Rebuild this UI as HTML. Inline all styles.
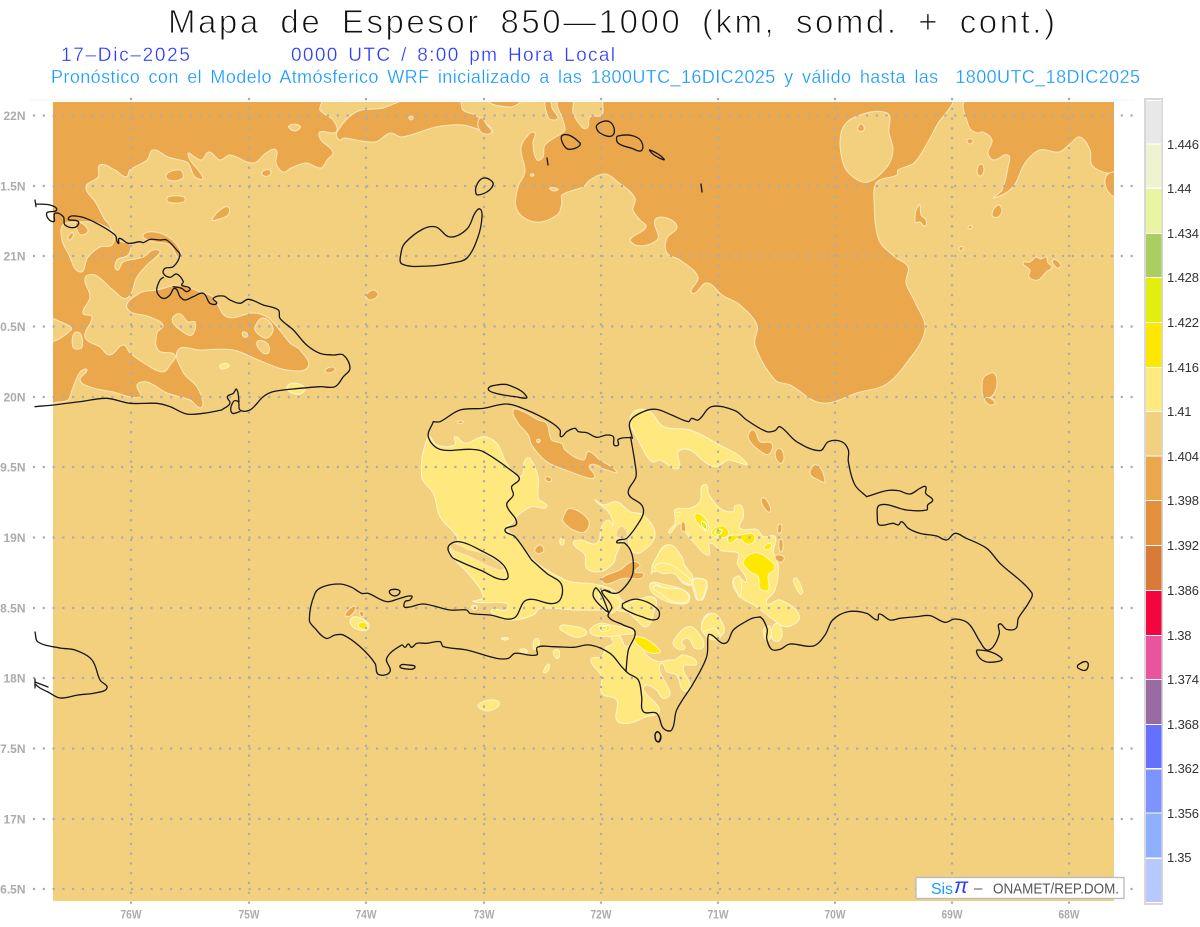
<!DOCTYPE html>
<html lang="es"><head><meta charset="utf-8"><title>Mapa de Espesor 850-1000</title>
<style>html,body{margin:0;padding:0;background:#fff;width:1200px;height:927px;overflow:hidden}svg{display:block}
text{font-family:"Liberation Sans",sans-serif;white-space:pre}
.d{fill:#eba74b;stroke:#fbe8bd;stroke-width:1;stroke-linejoin:round}
.l{fill:#f3d07e;stroke:#fbe8bd;stroke-width:1;stroke-linejoin:round}
.p{fill:#ffe97f;stroke:#fff6cf;stroke-width:1;stroke-linejoin:round}
.y{fill:#ffe800;stroke:#fff6cf;stroke-width:.8;stroke-linejoin:round}
.g{fill:#dde622;stroke:#fff;stroke-width:.6}
.c{fill:none;stroke:#161616;stroke-width:1.3;stroke-linejoin:round;stroke-linecap:round}
.lb{font-size:12px;font-weight:700;fill:#ababab}
.cl{font-size:13px;fill:#333}
.z .d,.z .l,.z .p,.z .y,.z .g{stroke-width:3}
.z .c{stroke-width:3.9}
</style></head><body>
<svg width="1200" height="927" viewBox="0 0 1200 927" xmlns="http://www.w3.org/2000/svg">
<defs><clipPath id="m"><rect x="53" y="102" width="1061" height="799"/></clipPath></defs>
<text x="168" y="33" font-size="33" word-spacing="8" textLength="887" lengthAdjust="spacing" fill="#111" stroke="#fff" stroke-width=".95">Mapa de Espesor 850—1000 (km, somd. + cont.)</text>
<text x="61" y="61" font-size="19" textLength="129" lengthAdjust="spacing" fill="#2b3dff" stroke="#fff" stroke-width=".3">17–Dic–2025</text>
<text x="291" y="61" font-size="19" word-spacing="3" textLength="324" lengthAdjust="spacing" fill="#2b3dff" stroke="#fff" stroke-width=".3">0000 UTC / 8:00 pm Hora Local</text>
<text x="51" y="83" font-size="18" word-spacing="3" textLength="1089" lengthAdjust="spacing" fill="#1a9bff" stroke="#fff" stroke-width=".25">Pronóstico con el Modelo Atmósferico WRF inicializado a las 1800UTC_16DIC2025 y válido hasta las  1800UTC_18DIC2025</text>

<path d="M30 100H1135" stroke="#f3f3f3" stroke-width="1"/>
<rect x="53" y="102" width="1061" height="799" fill="#f3d07e"/>
<g clip-path="url(#m)">
<!-- dark orange areas, real coords -->
<path class="d" d="M40,100 321,100 320,110 333,120 336,132 320,132 321,140 333,152 327,160 321,168 306,163 291,168 283,172 276,163 276,150 266,153 253,163 230,155 220,160 209,152 201,160 188,154 203,178 195,177 188,163 180,160 168,157 153,150 147,160 130,170 126,177 115,170 100,165 98,177 86,187 96,203 105,220 108,223 118,240 130,245 128,255 117,260 117,270 123,262 143,257 153,250 160,252 147,265 137,277 127,298 113,290 95,275 85,278 90,297 83,313 92,317 85,337 100,347 110,355 123,345 130,353 147,365 163,372 170,365 175,355 158,350 157,333 163,325 150,317 127,308 140,293 157,290 180,285 200,292 213,297 227,317 253,313 267,317 278,328 290,343 300,350 308,367 287,370 263,362 233,350 200,350 178,350 183,372 197,387 203,403 200,408 190,400 167,393 147,382 137,385 140,397 113,392 90,387 80,380 87,370 80,372 72,390 68,400 58,402 40,403Z"/>
<path class="l" d="M63,225 80,222 97,223 113,233 112,245 100,247 88,257 80,272 68,253 62,240Z"/>
<path class="d" d="M77,222 88,230 82,235 77,230Z"/>
<path class="d" d="M68,237 73,233 70,240Z"/>
<path class="l" d="M40,318 61,322 71,330 40,342Z"/>
<path class="l" d="M73,347 82,347 77,332Z"/>
<path class="l" d="M173,317 180,314 188,322 195,322 192,335 183,332 173,323Z"/>
<path class="l" d="M255,327 263,318 273,328 267,338 257,333Z"/>
<path class="l" d="M257,342 267,343 269,352 263,353Z"/>
<path class="l" d="M243,332 248,335 244,337Z"/>
<path class="l" d="M289,126 300,126 295,131Z"/>
<path class="d" d="M143,235 155,232 170,238 180,250 179,258 170,245 150,241Z"/>
<path class="d" d="M262,172 270,170 270,175 264,176Z"/>
<path class="d" d="M166,177 180,170 182,179Z"/>
<path class="d" d="M168,197 184,197 184,202 168,202Z"/>
<path class="d" d="M212,220 220,210 228,207 228,215 216,220Z"/>
<path class="d" d="M325,370 333,367 335,370 328,373Z"/>
<path class="d" d="M366,296 373,290 378,295 370,300Z"/>
<path class="p" d="M287,387 293,383 305,388 300,394 290,392Z"/>
<path class="p" d="M220,365 229,365 222,369Z"/>
<!-- strip 2 -->
<path class="d" d="M339,140 337,132 356,112 383,108 406,100 459,100 463,110 475,115 486,123 492,132 463,125 436,127 402,137 390,133 375,142 344,138Z"/>
<path class="l" d="M409,117 413,117 411,120Z"/>
<path class="d" d="M490,100 510,107 520,100Z"/>
<path class="d" d="M480,118 487,125 491,133 480,131Z"/>
<path class="d" d="M545,100 548,117 553,120 558,118 552,108 550,100Z"/>
<!-- central big dark -->
<path class="d" d="M558,100 572,100 573,113 583,128 588,127 590,117 602,115 605,100 950,100 937,125 925,147 914,163 898,170 897,175 877,182 874,200 879,240 895,257 908,267 906,283 914,300 925,330 905,365 885,385 860,392 822,403 790,385 775,380 755,345 757,325 740,305 722,295 707,283 692,293 698,277 680,260 667,253 667,238 677,227 667,218 655,220 657,240 631,242 646,227 640,220 633,210 635,198 618,182 605,174 590,180 583,187 562,195 562,203 557,215 535,222 517,210 518,187 525,172 521,148 530,133 535,133 533,143 537,160 543,157 545,145 562,133 565,130 562,117 558,108Z"/>
<path class="l" d="M550,188 558,189 554,191Z"/>
<path class="l" d="M531,174 534,175 531,176Z"/>
<!-- island of light in dark -->
<path class="l" d="M841,133 853,118 887,113 889,133 893,150 887,167 868,182 853,177 843,163Z"/>
<path class="d" d="M858,130 861,124 864,130Z"/>
<!-- east dark -->
<path class="d" d="M967,100 969,127 977,133 983,132 992,140 988,153 994,160 1008,155 1008,167 1002,190 994,198 1013,187 1025,163 1040,150 1059,152 1071,143 1080,137 1090,150 1092,165 1107,173 1125,172 1125,100Z"/>
<path class="d" d="M1107,175 1125,175 1125,197 1109,193Z"/>
<path class="d" d="M967,140 973,140 970,144Z"/>
<path class="d" d="M977,170 981,164 984,170 980,176Z"/>
<path class="d" d="M992,215 998,205 1002,210 998,217Z"/>
<path class="d" d="M915,222 919,205 921,215 926,220 925,226 920,222Z"/>
<path class="d" d="M1023,263 1030,262 1036,257 1041,259 1046,257 1048,263 1052,267 1046,272 1038,280 1029,277 1030,270Z"/>
<path class="d" d="M1053,260 1061,265 1057,268Z"/>
<path class="d" d="M982,385 985,376 995,374 995,392 985,398Z"/>
<path class="d" d="M985,398 995,402 990,405Z"/>
<path class="d" d="M968,227 972,226 970,229Z"/>
<path class="d" d="M959,248 963,247 961,251Z"/>

<!-- Hispaniola thickness -->
<g class="z" transform="translate(400 380) scale(.33333)">
<path class="p" d="M85,170 110,195 165,195 165,170 195,190 250,170 290,190 320,250 360,290 375,240 390,235 415,295 415,355 440,380 395,380 355,405 335,430 320,445 345,470 400,540 440,570 510,605 580,612 640,630 670,665 705,690 640,690 530,690 420,685 400,705 340,720 290,710 275,690 320,690 320,670 220,665 250,650 200,575 165,540 150,510 175,480 120,410 100,340 65,290Z"/>
<path class="l" d="M150,495 210,510 250,520 300,550 310,570 270,560 210,530Z"/>
<path class="p" d="M585,360 610,375 650,365 690,395 730,405 765,465 720,518 690,510 680,475 650,520 640,550 600,575 560,565 555,525 520,490 540,480 590,490 605,440 625,420 640,435 625,395Z"/>
<path class="l" d="M650,470 660,440 675,445 680,470Z"/>
<path class="p" d="M755,580 800,495 850,550 880,610 850,610 810,560 770,550Z"/>
<path class="p" d="M880,600 915,600 920,620 900,660Z"/>
<path class="p" d="M750,615 800,615 865,640 860,670 800,660Z"/>
<path class="d" d="M340,90 370,95 415,120 440,130 455,180 485,190 495,210 550,240 565,215 600,240 650,275 620,270 570,255 585,290 570,295 510,275 440,245 395,195 385,165 355,130Z"/>
<path class="l" d="M410,180 420,180 415,188Z"/>
<path class="d" d="M490,410 510,385 565,420 555,455 520,450 490,425Z"/>
<path class="d" d="M405,515 420,495 430,515Z"/>
<path class="d" d="M605,595 660,570 695,545 720,555 705,575 730,580 725,595 670,595 620,612Z"/>
<path class="d" d="M435,295 445,290 455,300 445,305Z"/>
<path class="d" d="M172,125 190,125 180,131Z"/>
<path class="p" d="M480,478 492,478 486,495Z"/>
</g>
<g class="z" transform="translate(600 400) scale(.33333)">
<path class="p" d="M90,60 110,30 150,35 190,80 270,90 350,130 440,190 385,180 350,200 320,190 270,150 235,155 235,205 180,180 155,185 120,130Z"/>
<path class="p" d="M205,395 225,370 225,330 245,325 270,325 300,305 305,260 320,255 325,280 360,325 400,335 405,318 425,318 430,350 420,385 470,388 490,410 525,410 520,455 535,500 525,570 500,610 540,600 598,648 560,680 515,655 470,620 420,590 398,550 410,530 440,545 412,490 415,460 385,455 360,450 330,430 325,465 285,430 255,395 240,370 210,400Z"/>
<path class="d" d="M243,385 250,365 256,395 248,393Z"/>
<path class="y" d="M430,485 465,458 510,480 525,505 505,525 505,570 480,565 475,530 450,515Z"/>
<path class="y" d="M385,410 420,405 460,402 462,425 440,432 415,415 390,430Z"/>
<path class="y" d="M285,343 315,355 325,390 305,385Z"/>
<path class="y" d="M335,395 370,378 385,405 355,412Z"/>
<path class="g" d="M305,365 320,375 315,388Z"/>
<path class="g" d="M345,395 365,390 355,405Z"/>
<path class="y" d="M492,440 510,430 515,440 500,450Z"/>
<path class="y" d="M230,340 240,340 235,348Z"/>
<path class="d" d="M445,115 460,90 480,125 515,130 510,160 490,160Z"/>
<path class="d" d="M525,160 540,145 552,175 540,190Z"/>
<path class="d" d="M630,220 650,195 675,245 655,240Z"/>
<path class="d" d="M485,295 500,300 510,335 490,320Z"/>
<path class="d" d="M535,375 545,375 538,400Z"/>
<path class="d" d="M538,420 547,420 548,450 540,455Z"/>
<path class="d" d="M525,470 540,465 553,475 540,487Z"/>
<path class="p" d="M580,540 590,535 608,575 600,582Z"/>
<path class="p" d="M280,540 320,545 297,600 280,560Z"/>
<path class="p" d="M160,490 205,435 245,470 255,500 278,530 260,550 225,515 190,500 160,515Z"/>
<path class="p" d="M150,555 200,565 245,570 265,590 260,610 190,600Z"/>
<path class="p" d="M305,685 330,640 370,680 345,720Z"/>
<path class="p" d="M80,620 110,600 165,595 160,640 140,680 110,660Z"/>
<path class="p" d="M0,570 30,580 60,610 25,640 0,600Z"/>
<path class="p" d="M515,690 530,670 545,690 540,720 520,720Z"/>
<path class="p" d="M490,690 510,680 505,720Z"/>
</g>
<g class="z" transform="translate(300 560) scale(.33333)">
<path class="p" d="M875,295 905,290 920,260 940,250 935,230 960,230 980,260 1005,235 1040,285 1075,305 1105,300 1125,300 1150,285 1190,310 1150,320 1172,380 1150,392 1130,345 1100,335 1085,310 1080,335 1110,400 1090,415 1070,390 1040,375 1030,390 1075,440 1075,460 1040,470 985,490 950,480 950,420 905,400 905,350 875,310Z"/>
<path class="y" d="M1005,230 1080,272 1040,275Z"/>
<path class="p" d="M780,200 815,198 860,215 835,232 800,220Z"/>
<path class="p" d="M870,210 900,190 930,195 1000,215 960,225 920,230 880,225Z"/>
<path class="y" d="M898,200 925,198 928,208 905,213Z"/>
<path class="g" d="M905,202 920,202 915,208Z"/>
<path class="p" d="M150,185 165,170 205,190 200,210 165,205Z"/>
<path class="y" d="M177,190 200,190 198,205 180,205Z"/>
<path class="d" d="M135,165 160,138 168,145 150,168Z"/>
<path class="d" d="M180,155 190,155 190,168 182,168Z"/>
<path class="p" d="M535,435 570,420 598,430 570,452 545,448Z"/>
<path class="p" d="M730,335 745,312 748,322 738,337Z"/>
<path class="p" d="M710,235 715,265 700,265Z"/>
<path class="p" d="M760,275 775,270 778,290 770,295Z"/>
<path class="p" d="M660,268 680,270 680,278 665,276Z"/>
<path class="p" d="M1120,245 1165,200 1200,225 1210,260 1185,265 1165,235 1145,245 1155,265 1130,265Z"/>
<path class="p" d="M1205,210 1235,160 1270,195 1265,225 1245,205Z"/>
<path class="p" d="M1060,80 1100,85 1150,90 1165,120 1120,125 1080,100Z"/>
<path class="p" d="M1180,60 1215,60 1220,70 1200,120 1185,90Z"/>
<path class="p" d="M1065,20 1100,10 1150,40 1175,70 1150,65 1120,40 1085,40Z"/>
<path class="p" d="M1300,60 1320,50 1320,110 1310,90Z"/>
<path class="p" d="M605,235 625,235 615,240Z"/>
<path class="p" d="M515,140 530,138 525,150Z"/>
</g>
</g>

<!-- grid -->
<g stroke="#acacac" stroke-width="2.2" stroke-dasharray="2.2 7.6" fill="none">
<path d="M32.9 115.5H1135M32.9 186H1135M32.9 256H1135M32.9 326.5H1135M32.9 397H1135M32.9 467H1135M32.9 537.5H1135M32.9 608H1135M32.9 678H1135M32.9 748.5H1135M32.9 819H1135M32.9 889H1135"/>
<path d="M131 97.9V906M249 97.9V906M366 97.9V906M484 97.9V906M601 97.9V906M718 97.9V906M835 97.9V906M952 97.9V906M1069 97.9V906"/>
</g>

<!-- coast real coords -->
<g class="c">
<path class="c" d="M480,209 482,217 478,237 467,258 452,263 429,266 402,264 401,253 405,243 423,229 436,227 450,237 467,229 475,213Z"/>
<path class="c" d="M484,178 493,185 478,195 476,187Z"/>
<path class="c" d="M563,135 580,143 576,148 566,148Z"/>
<path class="c" d="M547,158 548,165"/>
<path class="c" d="M597,125 610,122 613,135 600,133Z"/>
<path class="c" d="M618,136 638,138 642,150 631,148 618,143Z"/>
<path class="c" d="M650,150 664,159 654,155Z"/>
<path class="c" d="M701,184 702,192"/>
<path class="c" d="M35,632 38,642 60,648 75,650 92,660 100,680 107,688 95,693 78,695 60,698 48,692 40,688 35,684M35,679 35,688M35,682 48,687"/>
<path class="c" d="M1078,665 1087,662 1086,670 1078,668Z"/>
<path class="c" d="M655,735 658,732 661,737 658,742Z"/>
</g>
<g class="z" transform="translate(0 190) scale(.33333)">
<path class="c" d="M105,30 108,50M108,42 150,45 170,60 140,70 160,95 165,70 190,80 195,105 225,112 235,95 205,85 240,80 290,100 345,135 355,160 358,145 385,160 420,155 430,158 450,148 480,150 500,150 530,180 540,195 520,230 495,235 490,250 510,262 530,252 550,275 545,285 570,295 560,305 545,295 520,290M490,262 480,270 470,300 480,320 495,325 510,315 525,295 540,320 555,330 580,320 610,310 630,340 650,340 640,325 670,318 690,330 720,340 745,328 790,345 835,360 840,385 880,420 920,465 960,490 1000,495 1030,495 1050,535 1030,560 1005,590 960,590 900,595 820,605 790,620 750,660 720,660 715,635 700,635 695,668 720,665M665,660 690,640 682,620 700,610 710,598 717,635M665,660 610,670 560,672 510,650 470,640 390,640 320,625 240,635 160,645 105,650"/>
</g>
<g class="z" transform="translate(400 380) scale(.33333)">
<path class="c" d="M100,125 120,125 180,90 250,85 320,72 380,90 450,125 480,150 483,170 500,155 525,145 535,155 560,158 590,172 620,165 640,170 642,195 655,195 655,178 692,172"/>
<path class="c" d="M692,172 705,250 708,290 685,340 725,375 730,400 715,430 680,475 650,485 675,490 695,520 700,570 690,600 660,635 640,640 612,630"/>
<path class="c" d="M395,540 345,470 315,450 350,430 320,375 340,345 335,320 358,298 345,280 250,215 210,208 120,208 85,170 100,125"/>
<path class="c" d="M145,500 175,485 240,510 310,555 318,598 240,570 170,540 155,530Z"/>
<path class="c" d="M265,25 290,15 325,15 380,50 345,50 280,38Z"/>
</g>
<g class="z" transform="translate(600 400) scale(.33333)">
<path class="c" d="M97,115 90,65 130,35 170,28 215,45 265,65 275,55 295,60 335,20 405,32 440,60 500,95 525,92 540,80 590,125 660,152 685,125 725,125 745,150 745,185 765,255 800,290"/>
</g>
<g class="z" transform="translate(760 420) scale(.33333)">
<path class="c" d="M320,230 380,212 415,212 450,222 480,205 497,200 497,220 518,240 503,255 500,270 440,270 360,255 352,295 358,315 400,310 415,315 425,305 445,325 480,340 530,348 560,360 585,340 615,353 680,385 720,430 815,518 805,550 775,595 768,625 740,628 718,612 718,640 700,680 680,690 660,665 625,610 585,597 555,607 510,587 470,590 420,595 390,600 358,582 352,600 320,580 265,575 218,600 195,645 160,678 90,672 60,688 35,688 20,655 22,630 10,600 0,590"/>
<path class="c" d="M653,690 725,715 690,727 660,715Z"/>
</g>
<g class="z" transform="translate(300 560) scale(.33333)">
<path class="c" d="M1380,171 1359,174 1335,186 1300,210 1275,250 1235,225 1225,225 1220,290 1180,370 1130,450 1115,510 1090,505 1070,460 1030,455 1025,410 1015,360 985,340 965,320 930,280 870,255 820,262 760,260 712,262 710,285 645,280 625,295 590,295 500,270 430,260 420,245 380,250 350,250 335,262 325,252 315,262 305,255 260,295 270,335 235,343 225,310 180,260 130,225 105,225 78,235 45,205 28,180 45,100 70,80 120,72 155,82 185,100 205,100 260,125 300,115 335,108 330,120 315,125 315,142 370,132 450,150 500,150 510,160 570,165 640,175 680,120 770,128 785,75 740,40 695,0"/>
<path class="c" d="M915,90 905,95 935,140 925,170 970,195 1005,215 985,270 978,335"/>
<path class="c" d="M890,85 880,110 915,150 925,155Z"/>
<path class="c" d="M915,90 930,95"/>
<path class="c" d="M970,130 1015,118 1075,150 1070,178 1025,170 970,145Z"/>
<path class="c" d="M268,95 285,88 300,95 285,108Z"/>
<path class="c" d="M300,318 325,315 345,322 320,327Z"/>
<path class="c" d="M1065,525 1073,515 1082,530 1072,545Z"/>
</g>

<!-- lat labels -->
<g class="lb" text-anchor="end">
<text x="25.5" y="120">22N</text>
<text x="25.5" y="190.5">1.5N</text>
<text x="25.5" y="260.5">21N</text>
<text x="25.5" y="331">0.5N</text>
<text x="25.5" y="401.5">20N</text>
<text x="25.5" y="471.5">9.5N</text>
<text x="25.5" y="542">19N</text>
<text x="25.5" y="612.5">8.5N</text>
<text x="25.5" y="682.5">18N</text>
<text x="25.5" y="753">7.5N</text>
<text x="25.5" y="823.5">17N</text>
<text x="25.5" y="893.5">6.5N</text>
</g>
<g class="lb">
<text x="120.5" y="918.5" textLength="21" lengthAdjust="spacingAndGlyphs">76W</text>
<text x="238.5" y="918.5" textLength="21" lengthAdjust="spacingAndGlyphs">75W</text>
<text x="355.5" y="918.5" textLength="21" lengthAdjust="spacingAndGlyphs">74W</text>
<text x="473.5" y="918.5" textLength="21" lengthAdjust="spacingAndGlyphs">73W</text>
<text x="590.5" y="918.5" textLength="21" lengthAdjust="spacingAndGlyphs">72W</text>
<text x="707.5" y="918.5" textLength="21" lengthAdjust="spacingAndGlyphs">71W</text>
<text x="824.5" y="918.5" textLength="21" lengthAdjust="spacingAndGlyphs">70W</text>
<text x="941.5" y="918.5" textLength="21" lengthAdjust="spacingAndGlyphs">69W</text>
<text x="1058.5" y="918.5" textLength="21" lengthAdjust="spacingAndGlyphs">68W</text>
</g>

<!-- watermark -->
<rect x="916" y="877.5" width="208" height="21" fill="#fff" stroke="#bdbdbd" stroke-width="1.4"/>
<text x="931" y="894" font-size="16" textLength="22" fill="#1a9bff">Sis</text>
<text x="954" y="893" font-size="21" fill="#2b3dff" font-style="italic">π</text>
<text x="974" y="893" font-size="15" fill="#555">–</text>
<text x="993" y="893.5" font-size="14.5" textLength="126" lengthAdjust="spacingAndGlyphs" fill="#555">ONAMET/REP.DOM.</text>

<!-- colorbar -->
<rect x="1144" y="98" width="19" height="807" fill="#d8d8d8"/>
<rect x="1146" y="100" width="15.5" height="803" fill="#fff"/>
<g>
<rect x="1146" y="101" width="15.5" height="42.5" fill="#e8e8e8"/>
<rect x="1146" y="144.5" width="15.5" height="43" fill="#f0f3d0"/>
<rect x="1146" y="189" width="15.5" height="44" fill="#e8f4a0"/>
<rect x="1146" y="234" width="15.5" height="43" fill="#a9ce62"/>
<rect x="1146" y="278" width="15.5" height="44" fill="#e2ee10"/>
<rect x="1146" y="323" width="15.5" height="44" fill="#ffe800"/>
<rect x="1146" y="368" width="15.5" height="43" fill="#ffea7f"/>
<rect x="1146" y="412" width="15.5" height="43.5" fill="#f3d07e"/>
<rect x="1146" y="456.5" width="15.5" height="43.5" fill="#eba74b"/>
<rect x="1146" y="501" width="15.5" height="44" fill="#e48f3c"/>
<rect x="1146" y="546" width="15.5" height="44" fill="#d97a38"/>
<rect x="1146" y="591" width="15.5" height="44" fill="#f4053f"/>
<rect x="1146" y="636" width="15.5" height="43" fill="#eb539f"/>
<rect x="1146" y="680" width="15.5" height="44" fill="#996ba3"/>
<rect x="1146" y="725" width="15.5" height="43" fill="#6570ff"/>
<rect x="1146" y="769.5" width="15.5" height="43" fill="#7d93ff"/>
<rect x="1146" y="813.5" width="15.5" height="44" fill="#8fb0ff"/>
<rect x="1146" y="859" width="15.5" height="43" fill="#b8c9ff"/>
</g>
<g class="cl">
<text x="1167" y="149" textLength="32">1.446</text>
<text x="1167" y="193" textLength="24.5">1.44</text>
<text x="1167" y="238" textLength="32">1.434</text>
<text x="1167" y="282" textLength="32">1.428</text>
<text x="1167" y="327" textLength="32">1.422</text>
<text x="1167" y="372" textLength="32">1.416</text>
<text x="1167" y="416" textLength="24.5">1.41</text>
<text x="1167" y="461" textLength="32">1.404</text>
<text x="1167" y="505" textLength="32">1.398</text>
<text x="1167" y="550" textLength="32">1.392</text>
<text x="1167" y="595" textLength="32">1.386</text>
<text x="1167" y="640" textLength="24.5">1.38</text>
<text x="1167" y="684" textLength="32">1.374</text>
<text x="1167" y="729" textLength="32">1.368</text>
<text x="1167" y="773" textLength="32">1.362</text>
<text x="1167" y="818" textLength="32">1.356</text>
<text x="1167" y="862" textLength="24.5">1.35</text>
</g>
</svg>
<script>
document.querySelectorAll('path.d,path.l,path.p,path.y,path.g,path.c').forEach(function(el){
var subs=el.getAttribute('d').match(/M[^M]*/g),out='';
subs.forEach(function(s){
var closed=/Z/.test(s),pts=s.replace(/[MZ]/g,'').trim().split(/\s+/).map(function(q){return q.split(',').map(Number)}),n=pts.length;
if(n<3){out+=s;return}
function g(i){return closed?pts[(i+n)%n]:pts[Math.max(0,Math.min(n-1,i))]}
function tan(i){var a=g(i-1),b=g(i+1),x=b[0]-a[0],y=b[1]-a[1],l=Math.hypot(x,y)||1;return[x/l,y/l]}
out+='M'+pts[0][0]+','+pts[0][1];
var m=closed?n:n-1;
for(var i=0;i<m;i++){
var p1=g(i),p2=g(i+1),d=Math.hypot(p2[0]-p1[0],p2[1]-p1[1])/3,t1=tan(i),t2=tan(i+1);
out+='C'+(p1[0]+t1[0]*d).toFixed(1)+','+(p1[1]+t1[1]*d).toFixed(1)+' '+(p2[0]-t2[0]*d).toFixed(1)+','+(p2[1]-t2[1]*d).toFixed(1)+' '+p2[0]+','+p2[1];
}
if(closed)out+='Z';
});
el.setAttribute('d',out);
});
</script>
</body></html>
